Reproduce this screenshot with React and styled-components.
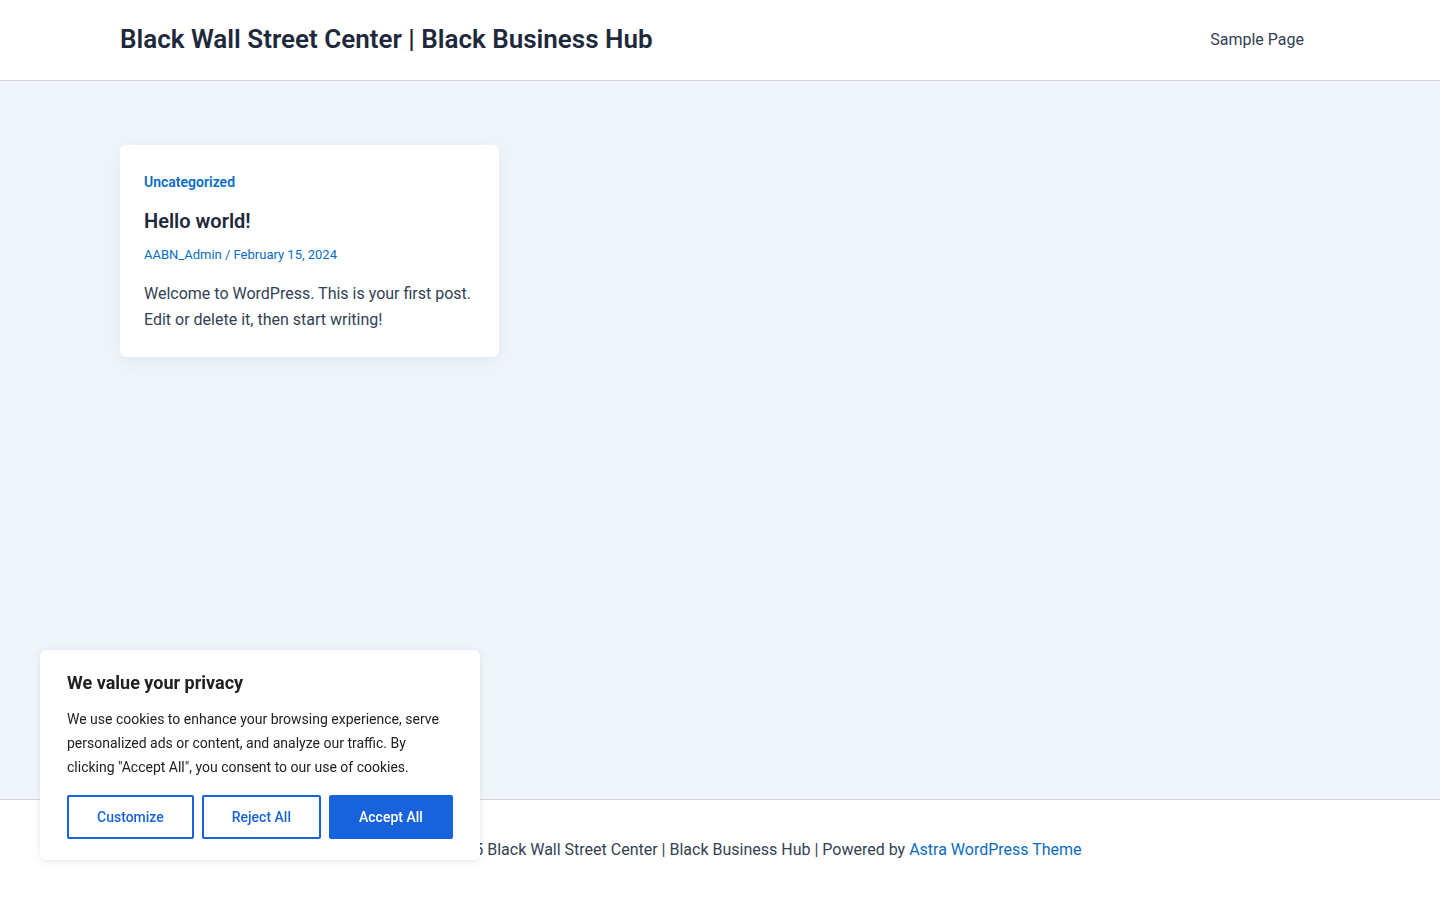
import styled, { createGlobalStyle } from "styled-components";

const GlobalStyle = createGlobalStyle`
  * {
    box-sizing: border-box;
  }

  body {
    margin: 0;
    font-family: Roboto, sans-serif;
    color: #334155;
    background: #f0f5fa;
  }
`;

const App = () => {
  return (
    <Page>
      <GlobalStyle />
      <Header>
        <SiteTitle>Black Wall Street Center | Black Business Hub</SiteTitle>
        <NavLink href="#">Sample Page</NavLink>
      </Header>

      <Main>
        <PostCard>
          <Category href="#">Uncategorized</Category>
          <PostTitle>Hello world!</PostTitle>
          <PostMeta>AABN_Admin / February 15, 2024</PostMeta>
          <Excerpt>Welcome to WordPress. This is your first post. Edit or delete it, then start writing!</Excerpt>
        </PostCard>
      </Main>

      <Footer>
        <span>
          Copyright © 2025 Black Wall Street Center | Black Business Hub | Powered by{" "}
          <FooterLink href="#">Astra WordPress Theme</FooterLink>
        </span>
      </Footer>

      <CookieBox>
        <CookieTitle>We value your privacy</CookieTitle>
        <CookieText>
          We use cookies to enhance your browsing experience, serve personalized ads or content, and analyze our traffic. By clicking "Accept All", you consent to our use of cookies.
        </CookieText>
        <CookieButtons>
          <CookieBtn>Customize</CookieBtn>
          <CookieBtn>Reject All</CookieBtn>
          <CookieBtn primary>Accept All</CookieBtn>
        </CookieButtons>
      </CookieBox>
    </Page>
  );
};

export default App;

const Page = styled.div`
  display: flex;
  flex-direction: column;
  height: 900px;
  overflow: hidden;
`;

const Header = styled.header`
  display: flex;
  align-items: center;
  justify-content: space-between;
  height: 81px;
  flex-shrink: 0;
  padding: 0 136px 0 120px;
  background: #fff;
  border-bottom: 1px solid #d1d5db;
`;

const SiteTitle = styled.div`
  font-size: 26px;
  font-weight: 600;
  line-height: 1.2;
  color: #1e293b;
`;

const NavLink = styled.a`
  margin-bottom: 1px;
  font-size: 16px;
  color: #334155;
  text-decoration: none;
`;

const Main = styled.main`
  flex: 1;
  padding: 64px 120px 0;
  background: #f0f5fa;
`;

const PostCard = styled.article`
  width: 379px;
  height: 212px;
  padding: 24px;
  background: #fff;
  border-radius: 6px;
  box-shadow: 0 4px 16px rgba(100, 116, 139, 0.1);
`;

const Category = styled.a`
  display: block;
  font-size: 14px;
  font-weight: 600;
  line-height: 26px;
  color: #0a6cc4;
  text-decoration: none;
`;

const PostTitle = styled.h2`
  margin: 13px 0 0;
  font-size: 20px;
  font-weight: 600;
  line-height: 26px;
  color: #1e293b;
`;

const PostMeta = styled.div`
  margin-top: 11px;
  font-size: 13px;
  line-height: 20px;
  color: #0a6cc4;
`;

const Excerpt = styled.p`
  margin: 16px 0 0;
  font-size: 16px;
  line-height: 26px;
  color: #334155;
`;

const Footer = styled.footer`
  display: flex;
  justify-content: center;
  height: 101px;
  flex-shrink: 0;
  padding-top: 37px;
  background: #fff;
  border-top: 1px solid #d1d5db;
  font-size: 16px;
  line-height: 26px;
  color: #334155;
`;

const FooterLink = styled.a`
  color: #0a6cc4;
  text-decoration: none;
`;

const CookieBox = styled.aside`
  position: fixed;
  left: 40px;
  bottom: 40px;
  width: 440px;
  height: 210px;
  padding: 21px 27px 0;
  background: #fff;
  border-radius: 6px;
  box-shadow: 0 0 0 1px rgba(0, 0, 0, 0.02), 0 2px 8px rgba(100, 116, 139, 0.12);
`;

const CookieTitle = styled.h3`
  margin: 0 0 12px;
  font-size: 18px;
  font-weight: 700;
  line-height: 24px;
  color: #212121;
`;

const CookieText = styled.p`
  margin: 0 0 16px;
  font-size: 14px;
  line-height: 24px;
  color: #212121;
`;

const CookieButtons = styled.div`
  display: flex;
  gap: 8px;
`;

const CookieBtn = styled.button`
  height: 44px;
  padding: 0 28px;
  border: 2px solid #1863dc;
  border-radius: 2px;
  background: ${(p) => (p.primary ? "#1863dc" : "#fff")};
  color: ${(p) => (p.primary ? "#fff" : "#1863dc")};
  font-family: Roboto, sans-serif;
  font-size: 14px;
  font-weight: 500;
  white-space: nowrap;
`;
